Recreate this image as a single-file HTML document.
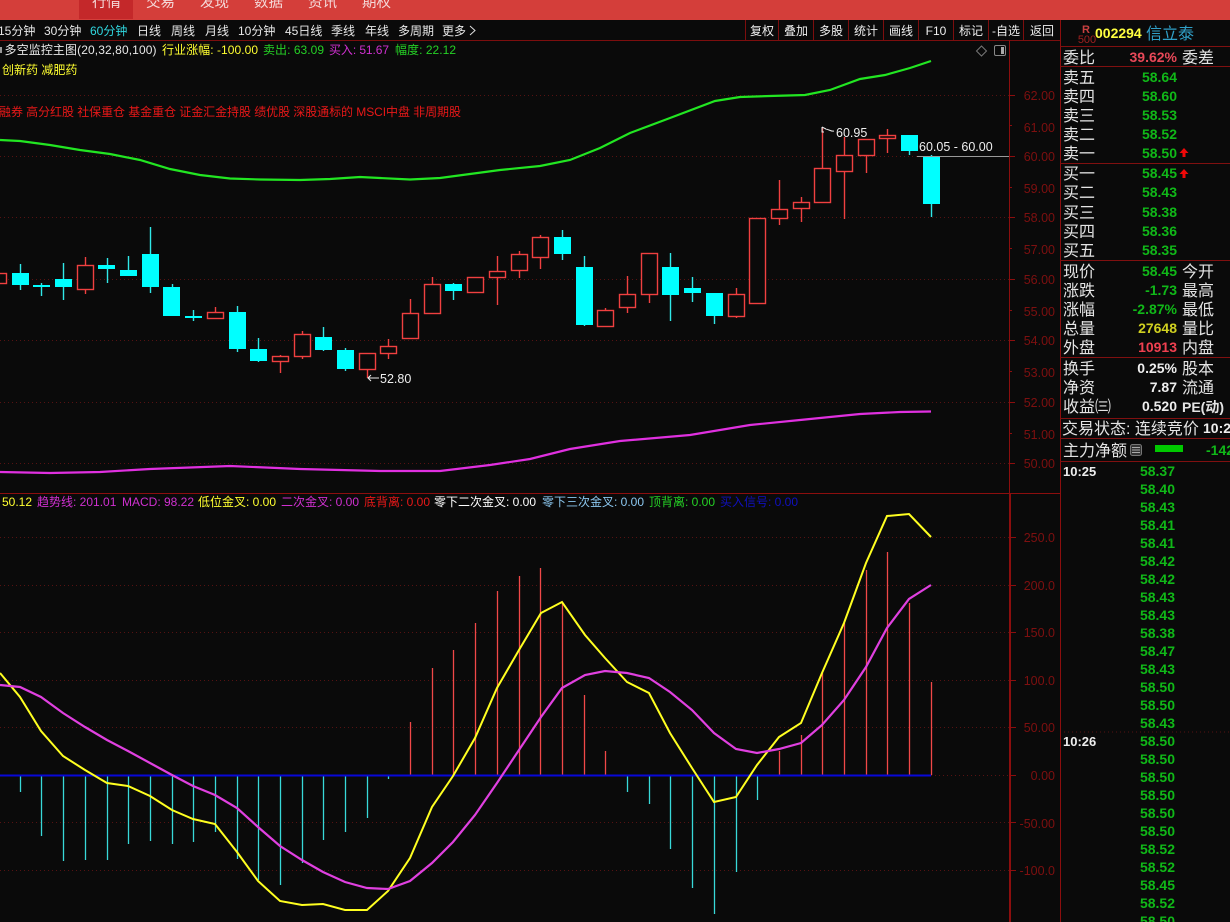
<!DOCTYPE html>
<html><head><meta charset="utf-8"><style>
html,body{margin:0;padding:0;background:#0a0a0a;width:1230px;height:922px;overflow:hidden}
svg{display:block}
text{font-family:"Liberation Sans","WenQuanYi Zen Hei","Noto Sans CJK SC",sans-serif;font-size:12px;fill:#ddd}
.n{font-size:14px;font-weight:bold;fill:#10b818;text-anchor:end}
.l{font-size:16px;fill:#e4e4e4}
.a{font-size:12.5px;fill:#7e1010;text-anchor:end}
.w{fill:#fff}
.y{fill:#ffff30}.g{fill:#25d025}.m{fill:#d030d0}.r{fill:#e81818}.b{fill:#1010c0}.c{fill:#8cc8f0}
.t{fill:#eee;text-anchor:middle;font-size:12px}
.k{fill:#e8e8e8;font-size:12px}
</style></head><body>
<svg width="1230" height="922" viewBox="0 0 1230 922" xmlns="http://www.w3.org/2000/svg">
<rect width="1230" height="922" fill="#0a0a0a"/>
<!-- top bar -->
<rect width="1230" height="20" fill="#d43e3a"/>
<rect x="79" width="54" height="19" fill="#c4282a"/>
<g>
<text x="92" y="7" style="font-size:14.5px;fill:#f4d8d8">行情</text>
<text x="146" y="7" style="font-size:14.5px;fill:#f4d8d8">交易</text>
<text x="200" y="7" style="font-size:14.5px;fill:#f4d8d8">发现</text>
<text x="254" y="7" style="font-size:14.5px;fill:#f4d8d8">数据</text>
<text x="308" y="7" style="font-size:14.5px;fill:#f4d8d8">资讯</text>
<text x="362" y="7" style="font-size:14.5px;fill:#f4d8d8">期权</text>
</g>
<!-- toolbar -->
<g>
<text class="k" x="-2" y="35">15分钟</text>
<text class="k" x="44" y="35">30分钟</text>
<text class="k" x="90" y="35" style="fill:#30d8e0">60分钟</text>
<text class="k" x="137" y="35">日线</text>
<text class="k" x="171" y="35">周线</text>
<text class="k" x="205" y="35">月线</text>
<text class="k" x="238" y="35">10分钟</text>
<text class="k" x="285" y="35">45日线</text>
<text class="k" x="331" y="35">季线</text>
<text class="k" x="365" y="35">年线</text>
<text class="k" x="398" y="35">多周期</text>
<text class="k" x="442" y="35">更多</text>
<path d="M470 26l5 4.500-5 4.500" fill="none" stroke="#ddd"/>
<text class="t" x="762" y="35">复权</text>
<text class="t" x="796" y="35">叠加</text>
<text class="t" x="831" y="35">多股</text>
<text class="t" x="866" y="35">统计</text>
<text class="t" x="901" y="35">画线</text>
<text class="t" x="936" y="35">F10</text>
<text class="t" x="971" y="35">标记</text>
<text class="t" x="1006" y="35">-自选</text>
<text class="t" x="1042" y="35">返回</text>
</g>
<path d="M0 40.500H1060M745.500 20V40M778.500 20V40M813.500 20V40M848.500 20V40M883.500 20V40M918.500 20V40M953.500 20V40M988.500 20V40M1023.500 20V40" stroke="#7c0e0e" shape-rendering="crispEdges"/>
<!-- header text -->
<rect x="0" y="47" width="2" height="6" fill="#999"/>
<text x="4.500" y="54" textLength="152" style="fill:#e8e8e8;font-size:12px">多空监控主图(20,32,80,100)</text>
<text x="162" y="54" class="y" textLength="96">行业涨幅: -100.00</text>
<text x="263" y="54" class="g" textLength="61">卖出: 63.09</text>
<text x="329" y="54" class="m" textLength="60">买入: 51.67</text>
<text x="395" y="54" class="g" textLength="61">幅度: 22.12</text>
<text x="2" y="74" class="y">创新药 减肥药</text>
<text x="-1" y="116" class="r" textLength="462" style="font-size:12px">融券 高分红股 社保重仓 基金重仓 证金汇金持股 绩优股 深股通标的 MSCI中盘 非周期股</text>
<path d="M981.500 46l5 5-5 5-5-5z" fill="none" stroke="#777"/>
<rect x="994.500" y="45.500" width="11" height="10" rx="1.500" fill="none" stroke="#888"/>
<rect x="1001" y="47" width="3" height="7" fill="#aaa"/>
<!-- grids -->
<path d="M0 95.500H1009M0 156.500H917M0 217.500H1009M0 279.500H1009M0 340.500H1009M0 402.500H1009M0 463.500H1009M0 537.500H1009M0 585.500H1009M0 632.500H1009M0 680.500H1009M0 727.500H1009M931 775.500H1009M0 822.500H1009M0 870.500H1009M1060 732H1230" stroke="#561212" stroke-dasharray="1 3" shape-rendering="crispEdges"/>
<!-- axes -->
<path d="M1009.500 40V922M1060.500 20V922M0 493.500H1060M1010.500 493V922" stroke="#8c0e0e" shape-rendering="crispEdges"/>
<path d="M1009 95.500h6M1009 125.500h3M1009 156.500h6M1009 187.500h3M1009 217.500h6M1009 248.500h3M1009 279.500h6M1009 310.500h3M1009 340.500h6M1009 371.500h3M1009 402.500h6M1009 433.500h3M1009 463.500h6M1010 537.500h6M1010 585.500h6M1010 632.500h6M1010 680.500h6M1010 727.500h6M1010 775.500h6M1010 822.500h6M1010 870.500h6" stroke="#8c0e0e" shape-rendering="crispEdges"/>
<g>
<text class="a" x="1055" y="100">62.00</text><text class="a" x="1055" y="132">61.00</text><text class="a" x="1055" y="161">60.00</text><text class="a" x="1055" y="193">59.00</text><text class="a" x="1055" y="222">58.00</text><text class="a" x="1055" y="254">57.00</text><text class="a" x="1055" y="284">56.00</text><text class="a" x="1055" y="316">55.00</text><text class="a" x="1055" y="345">54.00</text><text class="a" x="1055" y="377">53.00</text><text class="a" x="1055" y="407">52.00</text><text class="a" x="1055" y="439">51.00</text><text class="a" x="1055" y="468">50.00</text>
<text class="a" x="1055" y="542">250.0</text><text class="a" x="1055" y="590">200.0</text><text class="a" x="1055" y="637">150.0</text><text class="a" x="1055" y="685">100.0</text><text class="a" x="1055" y="732">50.00</text><text class="a" x="1055" y="780">0.00</text><text class="a" x="1055" y="828">-50.00</text><text class="a" x="1055" y="875">-100.0</text>
</g>
<!-- MA lines -->
<polyline fill="none" stroke="#22e622" stroke-width="2.200" points="0,140 20,141 50,145 80,150 110,154 140,160 170,169 200,175 230,178.500 260,179.500 300,180 330,179 360,177 380,178 410,179.500 440,178 470,174 500,170 540,166 570,160 600,148 630,133 670,118 715,101 740,97 770,96 805,95 830,90 860,79 885,75 910,68 931,61"/>
<polyline fill="none" stroke="#e030e0" stroke-width="2.200" points="0,472 50,473 100,472 150,469 230,466 300,469 380,471 440,471 490,465 530,459 570,449 620,441 690,435 750,425 800,420 860,414 900,412 931,411.500"/>
<!-- candle wicks -->
<path stroke="#30e8e8" stroke-width="1.400" fill="none" d="M20.500 264V290M41.500 283V296M63.500 263V300M107.500 258V283M128.500 256V276M150.500 227V293M172.500 284V316M193.500 310V321M237.500 306V352M258.500 338V362M323.500 327V351M345.500 348V371M453.500 283V300M562.500 230V260M584.500 256V326M670.500 253V321M692.500 277V302M714.500 293V324M909.500 135V155M931.500 155V217"/>
<path stroke="#f04040" stroke-width="1.400" fill="none" d="M85.500 257V294M215.500 307V319M280.500 355V373M302.500 331V359M367.500 353V378M388.500 339V359M410.500 299V339M432.500 277V314M497.500 256V305M519.500 251V278M540.500 235V269M605.500 308V327M627.500 276V313M649.500 253V303M736.500 288V318M779.500 180V225M801.500 197V222M822.500 128V203M844.500 137V219M866.500 139V173M887.500 129V153"/>
<!-- cyan bodies -->
<g fill="#00ffff" shape-rendering="crispEdges">
<rect x="12" y="273" width="17" height="12"/><rect x="33" y="285" width="17" height="2"/><rect x="55" y="279" width="17" height="8"/><rect x="98" y="265" width="17" height="4"/><rect x="120" y="270" width="17" height="6"/><rect x="142" y="254" width="17" height="33"/><rect x="163" y="287" width="17" height="29"/><rect x="185" y="316" width="17" height="2"/><rect x="229" y="312" width="17" height="37"/><rect x="250" y="349" width="17" height="12"/><rect x="315" y="337" width="17" height="13"/><rect x="337" y="350" width="17" height="19"/><rect x="445" y="284" width="17" height="7"/><rect x="554" y="237" width="17" height="17"/><rect x="576" y="267" width="17" height="58"/><rect x="662" y="267" width="17" height="28"/><rect x="684" y="288" width="17" height="5"/><rect x="706" y="293" width="17" height="23"/><rect x="901" y="135" width="17" height="16"/><rect x="923" y="157" width="17" height="47"/>
</g>
<!-- red bodies -->
<g fill="#0a0a0a" stroke="#f04040" stroke-width="1.400">
<rect x="-9.500" y="273.500" width="16" height="10"/><rect x="77.500" y="265.500" width="16" height="24"/><rect x="207.500" y="312.500" width="16" height="6"/><rect x="272.500" y="356.500" width="16" height="5"/><rect x="294.500" y="334.500" width="16" height="22"/><rect x="359.500" y="353.500" width="16" height="16"/><rect x="380.500" y="346.500" width="16" height="7"/><rect x="402.500" y="313.500" width="16" height="25"/><rect x="424.500" y="284.500" width="16" height="29"/><rect x="467.500" y="277.500" width="16" height="15"/><rect x="489.500" y="271.500" width="16" height="6"/><rect x="511.500" y="254.500" width="16" height="16"/><rect x="532.500" y="237.500" width="16" height="20"/><rect x="597.500" y="310.500" width="16" height="16"/><rect x="619.500" y="294.500" width="16" height="13"/><rect x="641.500" y="253.500" width="16" height="41"/><rect x="728.500" y="294.500" width="16" height="22"/><rect x="749.500" y="218.500" width="16" height="85"/><rect x="771.500" y="209.500" width="16" height="9"/><rect x="793.500" y="202.500" width="16" height="6"/><rect x="814.500" y="168.500" width="16" height="34"/><rect x="836.500" y="155.500" width="16" height="16"/><rect x="858.500" y="139.500" width="16" height="16"/><rect x="879.500" y="135.500" width="16" height="3"/>
</g>
<!-- annotations -->
<path d="M917 156.500H1009" stroke="#999" shape-rendering="crispEdges"/>
<text x="919" y="151" style="fill:#eee;font-size:12.5px">60.05 - 60.00</text>
<text x="836" y="137" style="fill:#eee;font-size:12.5px">60.95</text>
<path d="M834 131c-3 1-5-2-9-2M822 127v5h2M822 127l4 2" fill="none" stroke="#eee"/>
<text x="380" y="383" style="fill:#eee;font-size:12.5px">52.80</text>
<path d="M379 378H368M371 375l-3 3 3 3" fill="none" stroke="#eee"/>
<!-- MACD bars -->
<path stroke="#38d8d8" stroke-width="1.300" fill="none" d="M20.500 775V792M41.500 775V836M63.500 775V861M85.500 775V860M107.500 775V860M128.500 775V844M150.500 775V841M172.500 775V844M193.500 775V842M215.500 775V832M237.500 775V859M258.500 775V880M280.500 775V885M302.500 775V863M323.500 775V840M345.500 775V832M367.500 775V818M388.500 775V779M399 775.500H422M627.500 775V792M649.500 775V804M670.500 775V849M692.500 775V888M714.500 775V914M736.500 775V872M757.500 775V800"/>
<path stroke="#f04848" stroke-width="1.300" fill="none" d="M410.500 722V775M432.500 668V775M453.500 650V775M475.500 623V775M497.500 591V775M519.500 576V775M540.500 568V775M562.500 603V775M584.500 695V775M605.500 751V775M779.500 751V775M801.500 735V775M822.500 673V775M844.500 623V775M866.500 570V775M887.500 552V775M909.500 603V775M931.500 682V775"/>
<path d="M0 775.500H931" stroke="#0808d8" stroke-width="2"/>
<polyline fill="none" stroke="#ffff20" stroke-width="2" points="0,673 20,697 41,731 63,756 85,770 107,783 128,786 150,796 172,810 193,819 215,824 237,852 258,881 280,901 302,905 323,904 345,910 367,910 388,891 410,858 432,807 453,776 475,738 497,688 519,650 541,613 562,602 585,635 605,658 627,682 649,693 670,733 692,768 714,802 736,797 757,765 779,737 801,723 822,673 844,623 866,563 887,516 909,514 931,537"/>
<polyline fill="none" stroke="#e040e0" stroke-width="2.200" points="0,685 20,687 41,697 63,713 85,727 107,740 128,751 150,763 172,775 193,786 215,795 237,808 258,827 280,846 302,860 323,872 345,882 367,888 388,889 410,881 432,863 453,842 475,815 497,783 519,750 541,717 562,688 585,675 605,671 627,673 649,678 670,692 692,710 714,733 736,749 757,753 779,749 801,743 822,725 844,700 866,667 887,628 909,599 931,585"/>
<!-- MACD header -->
<text x="2" y="506" class="y">50.12</text>
<text x="37" y="506" class="m">趋势线: 201.01</text>
<text x="122" y="506" class="m">MACD: 98.22</text>
<text x="198" y="506" class="y">低位金叉: 0.00</text>
<text x="281" y="506" class="m">二次金叉: 0.00</text>
<text x="364" y="506" class="r">底背离: 0.00</text>
<text x="434" y="506" class="w">零下二次金叉: 0.00</text>
<text x="542" y="506" class="c">零下三次金叉: 0.00</text>
<text x="649" y="506" class="g">顶背离: 0.00</text>
<text x="720" y="506" class="b">买入信号: 0.00</text>
<!-- right panel -->
<path d="M1060 46.500H1230M1060 66.500H1230M1060 163.500H1230M1060 260.500H1230M1060 357.500H1230M1060 418.500H1230M1060 438.500H1230M1060 461.500H1230" stroke="#801010" shape-rendering="crispEdges"/>
<text x="1086" y="33" style="fill:#c84040;font-size:11px;font-weight:bold;text-anchor:middle">R</text>
<text x="1087" y="43" style="fill:#a02020;font-size:11px;text-anchor:middle">500</text>
<text x="1095" y="38" style="fill:#ffff40;font-size:14px;font-weight:bold">002294</text>
<text x="1146" y="39" style="fill:#30a0c8;font-size:16px">信立泰</text>
<text class="l" x="1063" y="63">委比</text><text class="n" x="1177" y="62" style="fill:#e84858">39.62%</text><text class="l" x="1182" y="63">委差</text>
<g>
<text class="l" x="1063" y="83">卖五</text><text class="n" x="1177" y="82">58.64</text>
<text class="l" x="1063" y="102">卖四</text><text class="n" x="1177" y="101">58.60</text>
<text class="l" x="1063" y="121">卖三</text><text class="n" x="1177" y="120">58.53</text>
<text class="l" x="1063" y="140">卖二</text><text class="n" x="1177" y="139">58.52</text>
<text class="l" x="1063" y="159">卖一</text><text class="n" x="1177" y="158">58.50</text>
<text class="l" x="1063" y="179">买一</text><text class="n" x="1177" y="178">58.45</text>
<text class="l" x="1063" y="198">买二</text><text class="n" x="1177" y="197">58.43</text>
<text class="l" x="1063" y="218">买三</text><text class="n" x="1177" y="217">58.38</text>
<text class="l" x="1063" y="237">买四</text><text class="n" x="1177" y="236">58.36</text>
<text class="l" x="1063" y="256">买五</text><text class="n" x="1177" y="255">58.35</text>
</g>
<path d="M1184 148l4.500 5h-3v4h-3v-4h-3zM1184 169l4.500 5h-3v4h-3v-4h-3z" fill="#f00808"/>
<g>
<text class="l" x="1063" y="277">现价</text><text class="n" x="1177" y="276">58.45</text><text class="l" x="1182" y="277">今开</text>
<text class="l" x="1063" y="296">涨跌</text><text class="n" x="1177" y="295">-1.73</text><text class="l" x="1182" y="296">最高</text>
<text class="l" x="1063" y="315">涨幅</text><text class="n" x="1177" y="314">-2.87%</text><text class="l" x="1182" y="315">最低</text>
<text class="l" x="1063" y="334">总量</text><text class="n" x="1177" y="333" style="fill:#d0d020">27648</text><text class="l" x="1182" y="334">量比</text>
<text class="l" x="1063" y="353">外盘</text><text class="n" x="1177" y="352" style="fill:#f04050">10913</text><text class="l" x="1182" y="353">内盘</text>
<text class="l" x="1063" y="374">换手</text><text class="n" x="1177" y="373" style="fill:#eee">0.25%</text><text class="l" x="1182" y="374">股本</text>
<text class="l" x="1063" y="393">净资</text><text class="n" x="1177" y="392" style="fill:#eee">7.87</text><text class="l" x="1182" y="393">流通</text>
<text class="l" x="1063" y="412">收益㈢</text><text class="n" x="1177" y="411" style="fill:#eee">0.520</text><text class="l" x="1182" y="412" style="font-size:14px;font-weight:bold">PE(动)</text>
<text class="l" x="1062" y="434">交易状态: 连续竞价</text><text x="1203" y="433" style="fill:#eee;font-size:14px;font-weight:bold">10:2</text>
<text class="l" x="1063" y="456">主力净额</text>
</g>
<rect x="1130.500" y="444.500" width="11" height="11" rx="2" fill="#333" stroke="#777"/>
<path d="M1132 447.500h8M1132 450h8M1132 452.500h8" stroke="#aaa"/>
<rect x="1155" y="445" width="28" height="7" fill="#00c800"/>
<text x="1206" y="455" style="fill:#10b818;font-size:14px;font-weight:bold">-142</text>
<!-- ticks -->
<text x="1063" y="476" style="fill:#eee;font-size:13px;font-weight:bold">10:25</text>
<text x="1063" y="746" style="fill:#eee;font-size:13px;font-weight:bold">10:26</text>
<g>
<text class="n" x="1175" y="476">58.37</text><text class="n" x="1175" y="494">58.40</text><text class="n" x="1175" y="512">58.43</text><text class="n" x="1175" y="530">58.41</text><text class="n" x="1175" y="548">58.41</text><text class="n" x="1175" y="566">58.42</text><text class="n" x="1175" y="584">58.42</text><text class="n" x="1175" y="602">58.43</text><text class="n" x="1175" y="620">58.43</text><text class="n" x="1175" y="638">58.38</text><text class="n" x="1175" y="656">58.47</text><text class="n" x="1175" y="674">58.43</text><text class="n" x="1175" y="692">58.50</text><text class="n" x="1175" y="710">58.50</text><text class="n" x="1175" y="728">58.43</text>
<text class="n" x="1175" y="746">58.50</text><text class="n" x="1175" y="764">58.50</text><text class="n" x="1175" y="782">58.50</text><text class="n" x="1175" y="800">58.50</text><text class="n" x="1175" y="818">58.50</text><text class="n" x="1175" y="836">58.50</text><text class="n" x="1175" y="854">58.52</text><text class="n" x="1175" y="872">58.52</text><text class="n" x="1175" y="890">58.45</text><text class="n" x="1175" y="908">58.52</text><text class="n" x="1175" y="926">58.50</text>
</g>
</svg>
</body></html>
